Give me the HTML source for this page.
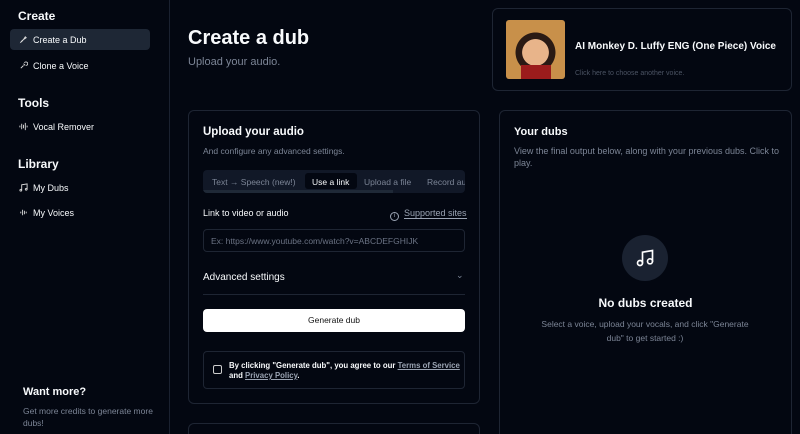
<!DOCTYPE html>
<html style="overflow:hidden;height:434px"><head><style>
*{box-sizing:border-box;margin:0;padding:0}
body{width:800px;height:434px;overflow:hidden;background:#030711;font-family:"Liberation Sans",sans-serif;color:#f8fafc;position:relative}
.a{position:absolute}
.side{left:0;top:0;width:170px;height:434px;border-right:1px solid #1a2130}
.h{font-size:12px;font-weight:bold;left:18px}
.it{font-size:9px;left:10px;width:140px;height:21px;border-radius:4px;display:flex;align-items:center;padding-left:9px;gap:5px}
.it svg{width:9px;height:9px}
.card{border:1px solid #1e2533;border-radius:6px}
.g{color:#7c8596}
</style></head><body>
<div class="a side"></div>
<div class="a h" style="top:9px">Create</div>
<div class="a it" style="top:29px;background:#1e2735">
<svg viewBox="0 0 10 10" fill="none" stroke="#ddd" stroke-width="1"><path d="M2 8c2-1 3-3 5-6l1 1c-3 2-5 3-6 5z"/></svg>Create a Dub</div>
<div class="a it" style="top:55px"><svg viewBox="0 0 10 10" fill="none" stroke="#ddd" stroke-width="1"><path d="M2 8l3-3M5 3l2 2M6 2a2 2 0 1 1 2 3"/></svg>Clone a Voice</div>
<div class="a h" style="top:96px">Tools</div>
<div class="a it" style="top:116px"><svg viewBox="0 0 10 10" stroke="#ddd" stroke-width="1"><path d="M1 4v2M3 2v6M5 3v4M7 1v8M9 4v2"/></svg>Vocal Remover</div>
<div class="a h" style="top:157px">Library</div>
<div class="a it" style="top:177px"><svg viewBox="0 0 10 10" fill="none" stroke="#ddd" stroke-width="1"><path d="M3 8V2l6-1v6"/><circle cx="2" cy="8" r="1"/><circle cx="8" cy="7" r="1"/></svg>My Dubs</div>
<div class="a it" style="top:202px"><svg viewBox="0 0 10 10" fill="none" stroke="#ddd" stroke-width="1"><path d="M2 4v2M4 2v6M6 3v4M8 4v2"/></svg>My Voices</div>
<div class="a" style="left:23px;top:386px;font-size:11px;font-weight:bold">Want more?</div>
<div class="a g" style="left:23px;top:405px;font-size:8.5px;line-height:12px;width:130px">Get more credits to generate more dubs!</div>

<div class="a" style="left:188px;top:27px;font-size:20px;font-weight:bold">Create a dub</div>
<div class="a g" style="left:188px;top:56px;font-size:11px">Upload your audio.</div>

<div class="a card" style="left:188px;top:110px;width:292px;height:294px"></div>
<div class="a card" style="left:188px;top:423px;width:292px;height:30px"></div>
<div class="a" style="left:203px;top:126px;font-size:11.5px;font-weight:bold">Upload your audio</div>
<div class="a g" style="left:203px;top:146px;font-size:8.5px">And configure any advanced settings.</div>
<div class="a" style="left:203px;top:170px;width:262px;height:23px;background:#111827;border-radius:4px;overflow:hidden;font-size:8.5px;white-space:nowrap">
<span class="a g" style="left:9px;top:7px">Text → Speech (new!)</span>
<span class="a" style="left:102px;top:3px;width:52px;height:16px;background:#030711;border-radius:3px;padding:4px 0 0 7px">Use a link</span>
<span class="a g" style="left:161px;top:7px">Upload a file</span>
<span class="a g" style="left:224px;top:7px">Record audio</span>
<div class="a" style="left:0;bottom:0;width:190px;height:3px;background:#1f2937"></div></div>
<div class="a" style="left:203px;top:208px;font-size:9px">Link to video or audio</div>
<div class="a g" style="left:390px;top:208px;font-size:9px;color:#9aa3b2"><span style="display:inline-block;width:9px;height:9px;border:1px solid #9aa3b2;border-radius:50%;font-size:6px;text-align:center;line-height:7px;vertical-align:-1px">i</span>&nbsp; <span style="border-bottom:1px solid #9aa3b2">Supported sites</span></div>
<div class="a" style="left:203px;top:229px;width:262px;height:23px;border:1px solid #1e2533;border-radius:4px;font-size:8.5px;color:#6b7384;padding:6px 0 0 7px">Ex: https://www.youtube.com/watch?v=ABCDEFGHIJK</div>
<div class="a" style="left:203px;top:272px;font-size:10px">Advanced settings</div>
<div class="a g" style="left:456px;top:270px;font-size:9px">⌄</div>
<div class="a" style="left:203px;top:294px;width:262px;height:1px;background:#1e2533"></div>
<div class="a" style="left:203px;top:309px;width:262px;height:23px;background:#fff;border-radius:4px;color:#111;font-size:8.5px;text-align:center;line-height:23px">Generate dub</div>
<div class="a card" style="left:203px;top:351px;width:262px;height:38px;border-radius:4px"></div>
<div class="a" style="left:213px;top:365px;width:9px;height:9px;border:1px solid #ccc;border-radius:2px"></div>
<div class="a" style="left:229px;top:361px;font-size:7.8px;line-height:10px;width:232px;font-weight:bold">By clicking "Generate dub", you agree to our <span style="color:#9aa3b2;text-decoration:underline">Terms of Service</span> and <span style="color:#9aa3b2;text-decoration:underline">Privacy Policy</span>.</div>

<div class="a card" style="left:492px;top:8px;width:300px;height:83px"></div>
<div class="a" style="left:506px;top:20px;width:59px;height:59px;border-radius:3px;background:radial-gradient(circle at 50% 55%,#e8b48a 0 30%,#2a1a14 31% 45%,#c8904a 46% 100%);overflow:hidden"><div class="a" style="left:15px;bottom:0;width:30px;height:14px;background:#9b1c1c"></div></div>
<div class="a" style="left:575px;top:41px;font-size:10px;font-weight:bold">AI Monkey D. Luffy ENG (One Piece) Voice</div>
<div class="a" style="left:575px;top:70px;font-size:7px;color:#4b5363">Click here to choose another voice.</div>

<div class="a card" style="left:499px;top:110px;width:293px;height:340px"></div>
<div class="a" style="left:514px;top:126px;font-size:11px;font-weight:bold">Your dubs</div>
<div class="a g" style="left:514px;top:145px;font-size:9px;line-height:12px;width:268px">View the final output below, along with your previous dubs. Click to play.</div>
<div class="a" style="left:622px;top:235px;width:46px;height:46px;border-radius:50%;background:#1a2231"></div>
<svg class="a" style="left:635px;top:248px" width="20" height="20" viewBox="0 0 24 24" fill="none" stroke="#fff" stroke-width="2" stroke-linecap="round"><path d="M9 18V5l12-2v13"/><circle cx="6" cy="18" r="3"/><circle cx="18" cy="16" r="3"/></svg>
<div class="a" style="left:499px;top:296px;width:293px;text-align:center;font-size:12px;font-weight:bold">No dubs created</div>
<div class="a g" style="left:535px;top:317px;width:220px;text-align:center;font-size:8.5px;line-height:14px">Select a voice, upload your vocals, and click "Generate dub" to get started :)</div>
</body></html>
